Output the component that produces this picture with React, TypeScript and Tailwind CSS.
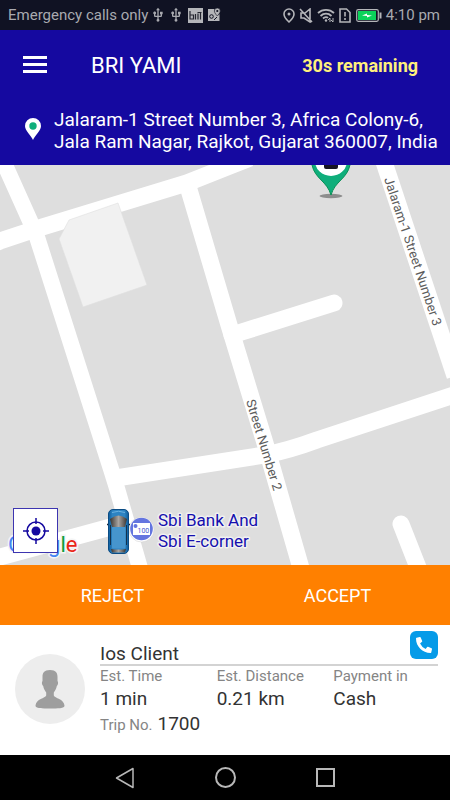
import { FC } from 'react';
import { MdUsb } from 'react-icons/md';
import { FaPhoneAlt } from 'react-icons/fa';

const StatusBar: FC = () => {
  return (
    <div className="flex h-[30px] items-center justify-between bg-[#101223] pr-[10px] pl-2 text-[15px] leading-5 text-[#a9aab0]">
      <div className="flex items-center gap-0.5">
        <span className="whitespace-nowrap">Emergency calls only</span>
        <MdUsb className="size-4" />
        <MdUsb className="size-4" />
        <svg viewBox="0 0 15 15" className="ml-0.5 size-[15px]">
          <rect width="15" height="15" fill="#b4b5b9" />
          <path d="M2 3v8h3.500V7H2M7.500 11.500V6M10 11.500V5.500M12.500 11.500V4M9.500 4.500h4" fill="none" stroke="#24252f" strokeWidth="1.200" />
        </svg>
        <svg viewBox="0 0 14 14" className="ml-0.5 size-[14px]">
          <path d="M1 1h6.500c-.5 3 1.500 5 3 6.500L12.500 6v7H1z" fill="#b4b5b9" />
          <circle cx="4.500" cy="8.500" r="1.800" fill="none" stroke="#101223" />
          <path d="M7 12l3-3" stroke="#101223" />
          <path d="M10.300 0a3 3 0 0 0-3 3c0 2 3 5 3 5s3-3 3-5a3 3 0 0 0-3-3z" fill="#b4b5b9" stroke="#101223" strokeWidth=".6" />
          <circle cx="10.300" cy="3" r="1.100" fill="#101223" />
        </svg>
      </div>
      <div className="flex items-center gap-1">
        <svg viewBox="0 0 12 15" className="h-[15px] w-3" fill="none" stroke="#b4b5b9" strokeWidth="1.600">
          <path d="M6 1a5 5 0 0 0-5 5c0 3.500 5 8 5 8s5-4.500 5-8a5 5 0 0 0-5-5z" />
          <circle cx="6" cy="6" r="1.500" fill="#b4b5b9" stroke="none" />
        </svg>
        <svg viewBox="0 0 14 15" className="h-[15px] w-[14px]" fill="none" stroke="#b4b5b9" strokeWidth="1.600">
          <path d="M11 11V1L6 5H2v5h3l6 4v-2M1 1l12 13" />
        </svg>
        <svg viewBox="0 0 18 15" className="h-[15px] w-[18px]" fill="none" stroke="#b4b5b9" strokeWidth="1.800">
          <path d="M1 5c4.500-4.300 11.500-4.300 16 0M3.500 8c3.300-3 7.700-3 11 0M6 10.500c1.800-1.600 4-1.600 5 -.5" />
          <circle cx="9" cy="12.500" r="1.200" fill="#b4b5b9" stroke="none" />
          <path d="M11 12l2-2v4M16 10v4l-2-2" strokeWidth="1" />
        </svg>
        <svg viewBox="0 0 12 15" className="h-[15px] w-3" fill="none" stroke="#b4b5b9" strokeWidth="1.600">
          <path d="M1 1h6.500L11 4.500V14H1zM6 4v4.500M6 10v2" />
        </svg>
        <svg viewBox="0 0 26 13" className="ml-px h-[13px] w-[26px]">
          <rect x=".7" y=".7" width="21.600" height="11.600" rx="1.500" fill="none" stroke="#b4b5b9" strokeWidth="1.200" />
          <rect x="2" y="2" width="18" height="9" fill="#0bd25a" />
          <path d="M6 6.500l5-2v1.500l5 .5-5 2V7z" fill="#fff" />
          <path d="M24.500 3.500v6" stroke="#b4b5b9" strokeWidth="2" />
        </svg>
        <span className="whitespace-nowrap">4:10 pm</span>
      </div>
    </div>
  );
};

const Header: FC = () => {
  return (
    <header className="bg-[#1509a0] text-white">
      <div className="flex h-[72px] items-center pr-8 pl-[23px]">
        <button type="button" aria-label="Menu" className="flex w-6 flex-col gap-1 pb-[3px]">
          <span className="h-[3px] w-full bg-white" />
          <span className="h-[3px] w-full bg-white" />
          <span className="h-[3px] w-full bg-white" />
        </button>
        <h1 className="ml-11 flex-1 text-[22px] leading-7">BRI YAMI</h1>
        <span className="text-lg font-bold text-[#fff07c]">30s remaining</span>
      </div>
      <div className="flex items-center gap-[13px] pt-[7px] pb-3 pl-[25px]">
        <svg viewBox="0 0 16 22" className="mb-1 h-[22px] w-4 shrink-0">
          <path d="M8 0a8 8 0 0 0-8 8c0 5 6 9 8 14 2-5 8-9 8-14a8 8 0 0 0-8-8z" fill="#fff" />
          <circle cx="8" cy="8" r="3.700" fill="#0fae7b" />
        </svg>
        <p className="text-[19px] leading-[22px]">
          Jalaram-1 Street Number 3, Africa Colony-6,
          <br />
          Jala Ram Nagar, Rajkot, Gujarat 360007, India
        </p>
      </div>
    </header>
  );
};

const MapView: FC = () => {
  return (
    <main className="relative min-h-[400px] flex-1 overflow-hidden bg-[#dedede]">
      <svg viewBox="0 0 450 400" preserveAspectRatio="xMidYMid slice" className="absolute inset-0 size-full">
        <defs>
          <linearGradient id="body" x1="0" x2="1">
            <stop offset="0" stopColor="#0d5c9c" />
            <stop offset=".2" stopColor="#2d83c2" />
            <stop offset=".8" stopColor="#2d83c2" />
            <stop offset="1" stopColor="#0d5c9c" />
          </linearGradient>
          <linearGradient id="glass" x1="0" x2="1">
            <stop offset="0" stopColor="#39332f" />
            <stop offset=".5" stopColor="#a9a5a2" />
            <stop offset="1" stopColor="#3a3532" />
          </linearGradient>
        </defs>
        {/* roads */}
        <g fill="none" stroke="#fff" strokeWidth="17">
          <path d="M-3 -18L5 0L31 58L37 72L111 304L116 320L142 410" strokeWidth="16" />
          <path d="M-10 80L0 76L42 62L187 18L232 0L250 -7" />
          <path d="M187 18L229 160L265 278L303 410" />
          <path d="M232 170L334 138" strokeLinecap="round" />
          <path d="M380 -15L455 211" />
          <path d="M116 313L265 290Q290 285 317 275L460 228" />
          <path d="M401 359L421 410" strokeLinecap="round" />
          <path d="M-10 395L0 392L107 363L125 358" />
        </g>
        <path d="M69 55L118 38L147 120L83 142L59 74Z" fill="#f1f1f1" stroke="#dfdfdf" strokeWidth=".6" />
        {/* street names */}
        <g fontSize="13" fill="#5c5c5c">
          <text transform="translate(384 14) rotate(71.500)">Jalaram-1 Street Number 3</text>
          <text transform="translate(246 236) rotate(73)">Street Number 2</text>
        </g>
        {/* pickup pin */}
        <ellipse cx="331" cy="31" rx="11.500" ry="2.200" fill="#8d8d8d" />
        <path d="M312 0C315 14 327 16 331 30C335 16 347 14 350 0V-10H312Z" fill="#0fae7b" stroke="#089056" />
        <ellipse cx="331" cy="-4" rx="16" ry="15" fill="#fff" />
        <rect x="324" y="-6" width="14" height="10" rx="2" fill="#161423" />
        {/* bank */}
        <circle cx="141.500" cy="364.500" r="12.500" fill="#fff" stroke="#ccc" strokeWidth=".5" />
        <circle cx="141.500" cy="364" r="11.300" fill="#6475df" />
        <rect x="133" y="358" width="17" height="12" fill="#fff" />
        <circle cx="135.500" cy="361" r="2" fill="#6475df" />
        <text x="137.500" y="368" fontSize="7" fill="#4658cf">100</text>
        <g fontSize="17" fill="#150fae" stroke="#f1f1f1" strokeWidth="3" strokeLinejoin="round" paintOrder="stroke">
          <text x="158" y="361">Sbi Bank And</text>
          <text x="158" y="382">Sbi E-corner</text>
        </g>
        {/* car */}
        <path d="M107 359.500h23" stroke="#1b2430" strokeWidth="1.500" />
        <rect x="108.500" y="344.500" width="20" height="44" rx="4.500" fill="url(#body)" stroke="#0b4c84" />
        <path d="M112 347.500Q118.500 345 125 347.500" fill="none" stroke="#6bb2e2" />
        <path d="M110 354Q118.500 347 127 354L125 362H112Z" fill="url(#glass)" />
        <path d="M110.500 360V380M126.500 360V380" stroke="#14324d" />
        <rect x="112" y="362" width="13.500" height="21.500" rx="1" fill="#4695cd" />
        <path d="M111 384Q118.500 385 126 384L125 387.500H112Z" fill="url(#glass)" />
      </svg>
      <div className="absolute bottom-2 left-2 flex text-[22px] leading-6 [-webkit-text-stroke:3px_#f5f5f5] [paint-order:stroke]">
        <span className="text-[#4285f4]">G</span>
        <span className="text-[#ea4335]">o</span>
        <span className="text-[#fbbc05]">o</span>
        <span className="text-[#4285f4]">g</span>
        <span className="text-[#0f9d3d]">l</span>
        <span className="text-[#ea2518]">e</span>
      </div>
      <button
        type="button"
        aria-label="My location"
        className="absolute bottom-3 left-[13px] flex size-[45px] items-center justify-center border border-[#3d35b0] bg-white"
      >
        <svg viewBox="0 0 26 26" className="size-[26px]" fill="none" stroke="#1509a0" strokeWidth="1.500">
          <circle cx="13" cy="13" r="9" />
          <circle cx="13" cy="13" r="4.500" fill="#1509a0" stroke="none" />
          <path d="M13 0v6M13 20v6M0 13h6M20 13h6" />
        </svg>
      </button>
    </main>
  );
};

const details = [
  { label: 'Est. Time', value: '1 min' },
  { label: 'Est. Distance', value: '0.21 km' },
  { label: 'Payment in', value: 'Cash' },
];

const TripCard: FC = () => {
  return (
    <section className="flex items-center gap-[15px] bg-white pt-[6px] pr-3 pb-4 pl-[15px] text-[#333]">
      <div className="mt-2 size-[70px] shrink-0 rounded-full bg-[#ededed]">
        <svg viewBox="0 0 70 70" className="size-full">
          <path
            d="M35 16c-6 0-7.500 3-7.500 7v4c-1 1-.7 4 .7 5 .4 3 2 5 3 6.500v3c-1 3-10 3-10.700 10-.4 3 7 3 14.500 3s14.900 0 14.500-3c-.7-7-9.700-7-10.700-10v-3c1-1.500 2.600-3.500 3-6.500 1.400-1 1.700-4 .7-5v-4c0-4-1.500-7-7.500-7z"
            fill="#9e9e9e"
          />
        </svg>
      </div>
      <div className="flex-1">
        <div className="flex items-end justify-between border-b-2 border-[#d3d3d3]">
          <h2 className="text-[19px] leading-[21px]">Ios Client</h2>
          <button type="button" aria-label="Call client" className="mb-[5px] flex size-7 items-center justify-center rounded-md bg-[#069be8] text-white">
            <FaPhoneAlt className="size-4" />
          </button>
        </div>
        <dl className="-mr-3 grid grid-cols-3">
          {details.map((item) => (
            <div key={item.label}>
              <dt className="text-[15px] leading-[21px] text-[#858585]">{item.label}</dt>
              <dd className="text-[19px] leading-[23px]">{item.value}</dd>
            </div>
          ))}
        </dl>
        <p className="flex items-baseline gap-[5px] leading-7">
          <span className="text-[15px] text-[#858585]">Trip No.</span>
          <span className="text-[19px]">1700</span>
        </p>
      </div>
    </section>
  );
};

const NavBar: FC = () => {
  return (
    <nav className="flex h-[45px] items-center justify-center gap-20 bg-black">
      <button type="button" aria-label="Back">
        <svg viewBox="0 0 20 22" className="h-[22px] w-5" fill="none" stroke="#b8b8b8" strokeWidth="1.500" strokeLinejoin="round">
          <path d="M18 1.500v19L1.500 11z" />
        </svg>
      </button>
      <button type="button" aria-label="Home" className="size-[21px] rounded-full border-2 border-[#b8b8b8]" />
      <button type="button" aria-label="Recent apps" className="size-[19px] border-2 border-[#b8b8b8]" />
    </nav>
  );
};

const App: FC = () => {
  return (
    <div className="flex min-h-dvh flex-col font-['Roboto','Liberation_Sans',sans-serif]">
      <StatusBar />
      <Header />
      <MapView />
      <div className="grid h-[60px] grid-cols-2 bg-[#ff8000] pt-0.5 text-lg text-white">
        <button type="button">REJECT</button>
        <button type="button">ACCEPT</button>
      </div>
      <TripCard />
      <NavBar />
    </div>
  );
};

export default App;
